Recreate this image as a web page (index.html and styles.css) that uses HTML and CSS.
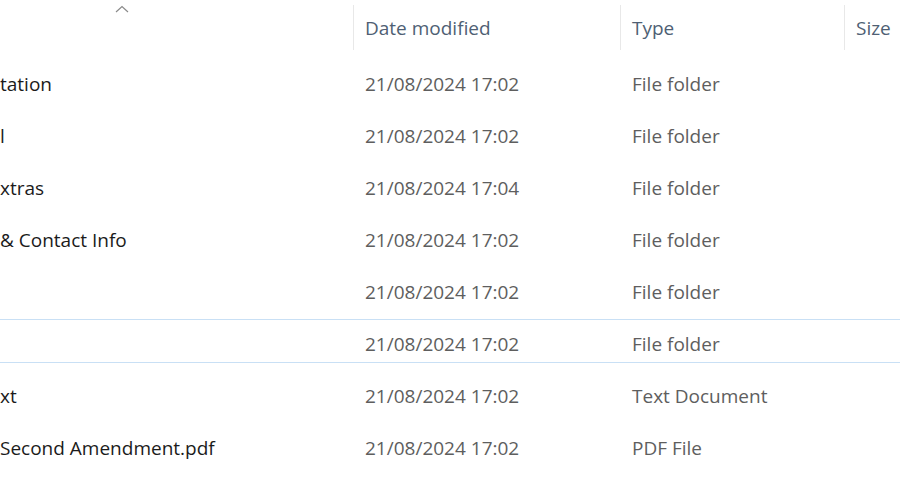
FILE: index.html
```html
<!DOCTYPE html>
<html lang="en">
<head>
    <meta charset="UTF-8">
    <title>Files</title>
    <link rel="stylesheet" href="styles.css">
</head>
<body>
    <div class="file-list">
        <div class="header">
            <div class="col name-col">
                <svg class="sort-arrow" width="14" height="8" viewBox="0 0 14 8">
                    <path d="M1 7 L7 1.5 L13 7" fill="none" stroke="#8a8a8a" stroke-width="1.2"/>
                </svg>
            </div>
            <div class="col date-col">Date modified</div>
            <div class="col type-col">Type</div>
            <div class="col size-col">Size</div>
        </div>

        <div class="row">
            <div class="col name-col"><span class="name">tation</span></div>
            <div class="col date-col">21/08/2024 17:02</div>
            <div class="col type-col">File folder</div>
            <div class="col size-col"></div>
        </div>
        <div class="row">
            <div class="col name-col"><span class="name">l</span></div>
            <div class="col date-col">21/08/2024 17:02</div>
            <div class="col type-col">File folder</div>
            <div class="col size-col"></div>
        </div>
        <div class="row">
            <div class="col name-col"><span class="name">xtras</span></div>
            <div class="col date-col">21/08/2024 17:04</div>
            <div class="col type-col">File folder</div>
            <div class="col size-col"></div>
        </div>
        <div class="row">
            <div class="col name-col"><span class="name">&amp; Contact Info</span></div>
            <div class="col date-col">21/08/2024 17:02</div>
            <div class="col type-col">File folder</div>
            <div class="col size-col"></div>
        </div>
        <div class="row">
            <div class="col name-col"><span class="name"></span></div>
            <div class="col date-col">21/08/2024 17:02</div>
            <div class="col type-col">File folder</div>
            <div class="col size-col"></div>
        </div>
        <div class="row focused">
            <div class="col name-col"><span class="name"></span></div>
            <div class="col date-col">21/08/2024 17:02</div>
            <div class="col type-col">File folder</div>
            <div class="col size-col"></div>
        </div>
        <div class="row">
            <div class="col name-col"><span class="name">xt</span></div>
            <div class="col date-col">21/08/2024 17:02</div>
            <div class="col type-col">Text Document</div>
            <div class="col size-col"></div>
        </div>
        <div class="row">
            <div class="col name-col"><span class="name">Second Amendment.pdf</span></div>
            <div class="col date-col">21/08/2024 17:02</div>
            <div class="col type-col">PDF File</div>
            <div class="col size-col"></div>
        </div>
    </div>
</body>
</html>
```

FILE: styles.css
```css
body {
    margin: 0;
    background-color: #ffffff;
    font-family: 'Open Sans', 'Noto Sans', sans-serif;
    font-size: 19px;
    color: #1b1b1b;
    overflow: hidden;
}

.file-list {
    width: 900px;
}

.header,
.row {
    display: grid;
    grid-template-columns: 353px 267px 224px 56px;
}

.col {
    padding-left: 11px;
    white-space: nowrap;
    overflow: hidden;
}

.header {
    height: 51px;
}

.header .col {
    display: flex;
    align-items: center;
    color: #4f5f74;
    margin-top: 5px;
    height: 45px;
}

.header .col + .col {
    border-left: 1px solid #e8e8e8;
}

.header .name-col {
    position: relative;
}

.sort-arrow {
    position: absolute;
    left: 115px;
    top: 0;
}

.row {
    height: 44px;
    margin-top: 8px;
    align-items: center;
    border-top: 1px solid transparent;
    border-bottom: 1px solid transparent;
    box-sizing: border-box;
}

.row:first-of-type {
    margin-top: 0;
}

.row .col {
    padding-top: 6px;
}

.row .name-col {
    padding-left: 0;
}

.row .date-col,
.row .type-col {
    color: #5e5e5e;
}

.row .col + .col {
    border-left: 1px solid transparent;
}

.focused {
    border-top-color: #c9e0f5;
    border-bottom-color: #c9e0f5;
}
```
